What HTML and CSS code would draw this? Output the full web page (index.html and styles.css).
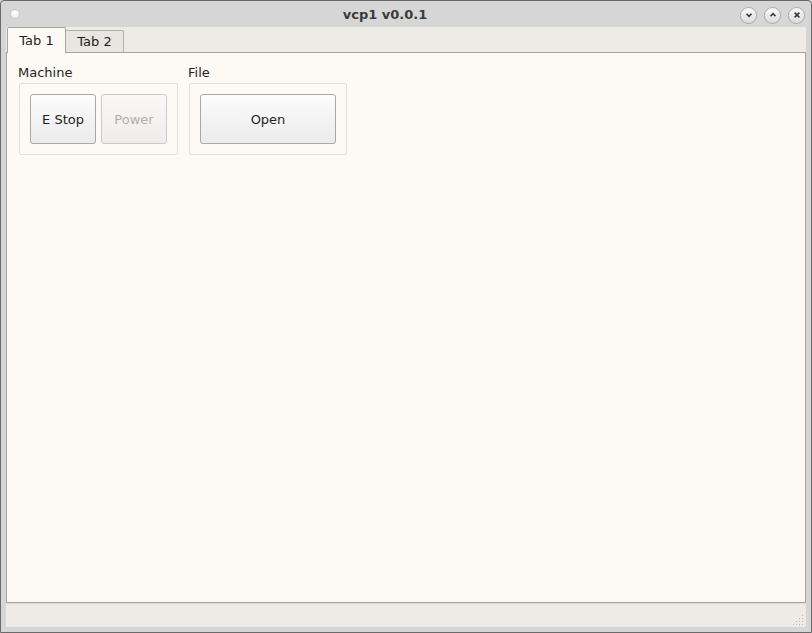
FILE: index.html
```html
<!DOCTYPE html>
<html lang="en">
<head>
    <meta charset="UTF-8">
    <title>vcp1 v0.0.1</title>
    <link rel="stylesheet" href="styles.css">
</head>
<body>
    <div class="window">
        <div class="titlebar">
            <div class="title-left"><span class="menu-dot"></span></div>
            <div class="title">vcp1 v0.0.1</div>
            <div class="title-buttons">
                <span class="wbtn">
                    <svg width="16" height="16" viewBox="0 0 16 16"><path d="M5.5 6.8 L8 9.3 L10.5 6.8" fill="none" stroke="#3a3a3a" stroke-width="1.6"/></svg>
                </span>
                <span class="wbtn">
                    <svg width="16" height="16" viewBox="0 0 16 16"><path d="M5.5 9.2 L8 6.7 L10.5 9.2" fill="none" stroke="#3a3a3a" stroke-width="1.6"/></svg>
                </span>
                <span class="wbtn">
                    <svg width="16" height="16" viewBox="0 0 16 16"><path d="M5.6 5.6 L10.4 10.4 M10.4 5.6 L5.6 10.4" fill="none" stroke="#3a3a3a" stroke-width="1.6"/></svg>
                </span>
            </div>
        </div>

        <div class="client">
            <div class="tabs">
                <div class="tab active">Tab 1</div>
                <div class="tab">Tab 2</div>
            </div>
            <div class="pane">
                <div class="groups">
                    <div class="group">
                        <div class="group-label">Machine</div>
                        <div class="group-box">
                            <button class="btn">E Stop</button>
                            <button class="btn" disabled>Power</button>
                        </div>
                    </div>
                    <div class="group">
                        <div class="group-label">File</div>
                        <div class="group-box">
                            <button class="btn wide">Open</button>
                        </div>
                    </div>
                </div>
            </div>
            <div class="statusbar">
                <svg class="grip" width="12" height="12" viewBox="0 0 12 12">
                    <rect x="10" y="2" width="1" height="1" fill="#bdb9b5"/>
                    <rect x="10" y="5" width="1" height="1" fill="#bdb9b5"/>
                    <rect x="7" y="5" width="1" height="1" fill="#bdb9b5"/>
                    <rect x="10" y="8" width="1" height="1" fill="#bdb9b5"/>
                    <rect x="7" y="8" width="1" height="1" fill="#bdb9b5"/>
                    <rect x="4" y="8" width="1" height="1" fill="#bdb9b5"/>
                    <rect x="10" y="11" width="1" height="1" fill="#bdb9b5"/>
                    <rect x="7" y="11" width="1" height="1" fill="#bdb9b5"/>
                    <rect x="4" y="11" width="1" height="1" fill="#bdb9b5"/>
                    <rect x="1" y="11" width="1" height="1" fill="#bdb9b5"/>
                </svg>
            </div>
        </div>
    </div>
</body>
</html>
```

FILE: styles.css
```css
html, body { margin: 0; padding: 0; }
body { font-family: "DejaVu Sans", sans-serif; font-size: 13px; color: #1e1e1e; background: #d6d6d6; }

.window {
    width: 812px;
    height: 633px;
    box-sizing: border-box;
    border: 1px solid #6a6a6a;
    border-radius: 4px 4px 0 0;
    background: #d6d6d6;
    display: flex;
    flex-direction: column;
}

.titlebar {
    height: 26px;
    display: flex;
    align-items: center;
}
.title-left {
    width: 29px;
    display: flex;
    align-items: center;
    padding-left: 10px;
    box-sizing: border-box;
}
.menu-dot {
    width: 8px;
    height: 8px;
    border-radius: 50%;
    background: radial-gradient(circle at 45% 40%, #ffffff 0%, #f4f4f4 50%, #cfcfcf 100%);
    box-shadow: 0 0 0 1px #c8c8c8;
}
.title {
    flex: 1;
    text-align: center;
    font-weight: bold;
    font-size: 13px;
    color: #3b3b3b;
    padding-top: 1px;
}
.title-buttons {
    display: flex;
    gap: 7px;
    padding-right: 6px;
    padding-top: 2px;
}
.wbtn {
    width: 17px;
    height: 17px;
    flex: none;
    border-radius: 50%;
    box-sizing: border-box;
    border: 1px solid #a9a9a9;
    background: linear-gradient(#fafafa, #dcdcdc);
    display: flex;
    align-items: center;
    justify-content: center;
}
.wbtn svg { display: block; flex: none; }

.client {
    flex: 1;
    margin: 0 5px 5px;
    background: #eeebe7;
    display: flex;
    flex-direction: column;
}

.tabs {
    height: 25px;
    display: flex;
    align-items: flex-end;
    padding-left: 1px;
}
.tab {
    height: 22px;
    width: 59px;
    box-sizing: border-box;
    border: 1px solid #b3b0ad;
    border-bottom: none;
    border-radius: 2px 2px 0 0;
    background: #e9e5e1;
    display: flex;
    align-items: center;
    justify-content: center;
    margin-left: -1px;
}
.tab:first-child { margin-left: 0; }
.tab.active {
    height: 26px;
    width: 59px;
    margin-bottom: -1px;
    background: #fdfaf6;
    border-color: #a6a3a0;
    position: relative;
    z-index: 1;
    padding-bottom: 1px;
}

.pane {
    flex: 1;
    background: #fdfaf6;
    border: 1px solid #a6a3a0;
    padding: 12px 12px;
}
.groups {
    display: flex;
    gap: 11px;
}
.group-label {
    height: 18px;
    line-height: 16px;
    margin-left: -1px;
}
.group-box {
    border: 1px solid #e4e0dc;
    border-radius: 2px;
    padding: 10px;
    display: flex;
    gap: 5px;
}

.btn {
    width: 66px;
    height: 50px;
    font-family: "DejaVu Sans", sans-serif;
    font-size: 13px;
    color: #1e1e1e;
    border: 1px solid #aaa7a4;
    border-radius: 3px;
    background: linear-gradient(#fcfcfc, #ebebeb);
    padding: 0;
}
.btn:disabled {
    color: #b3afab;
    border-color: #cdc9c5;
    background: linear-gradient(#faf8f6, #efedeb);
}
.btn.wide { width: 136px; }

.statusbar {
    height: 23px;
    border-top: 1px solid #e0ddd9;
    display: flex;
    justify-content: flex-end;
    align-items: flex-end;
}
.grip { display: block; margin: 0 2px 2px 0; }
```
